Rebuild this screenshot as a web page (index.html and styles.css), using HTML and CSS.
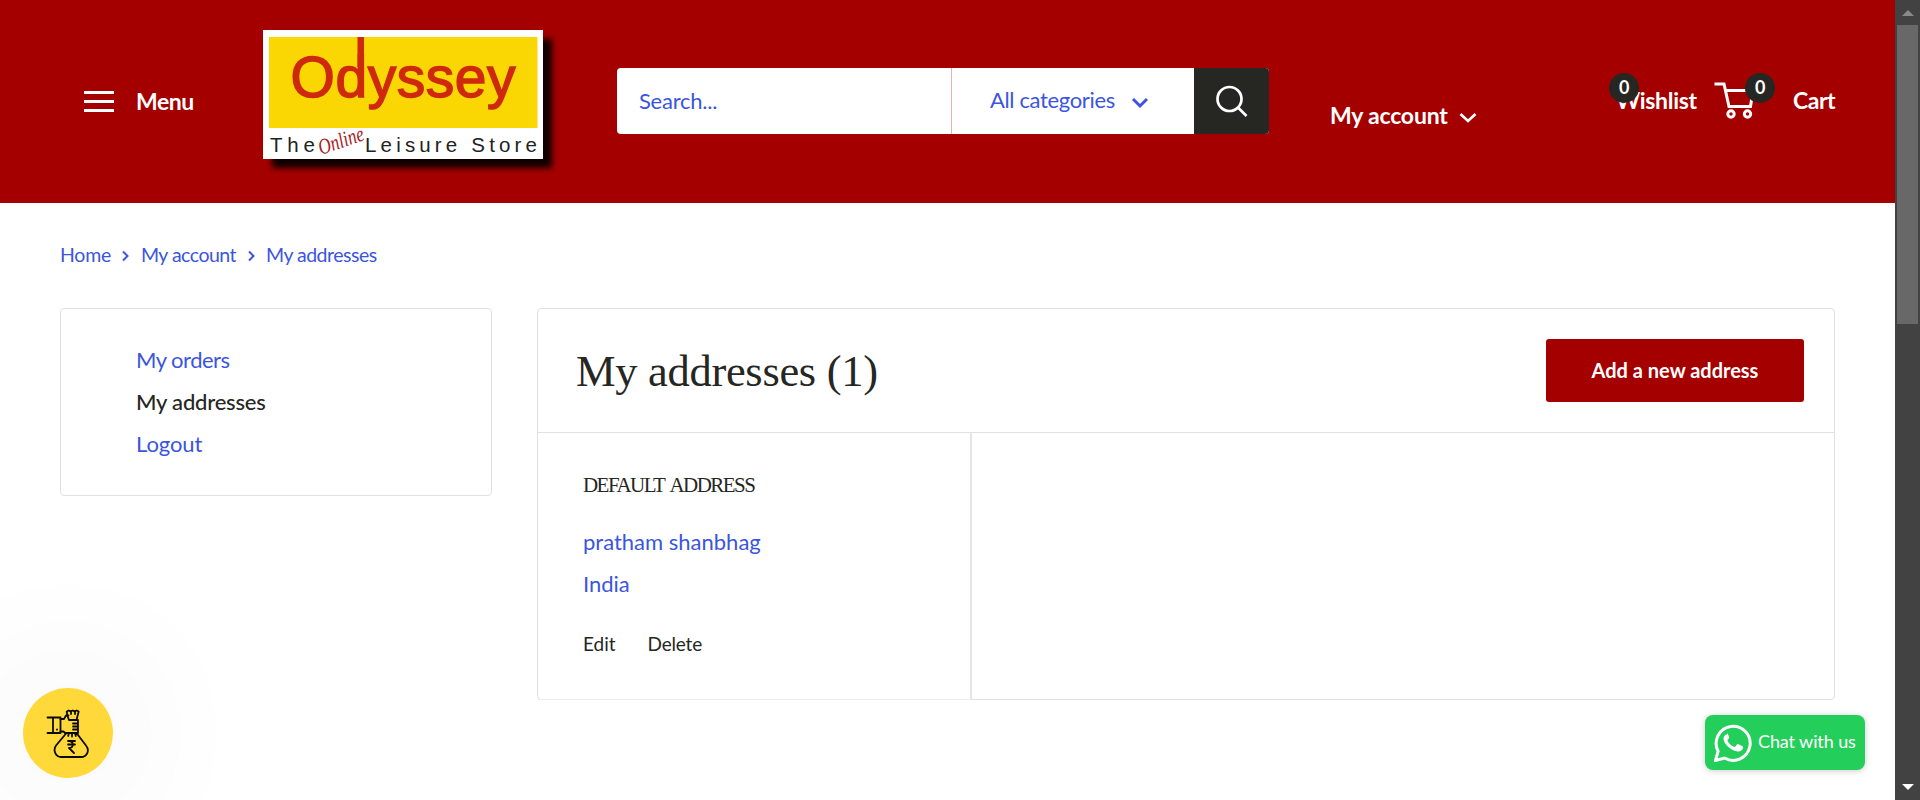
FILE: index.html
```html
<!DOCTYPE html>
<html lang="en">
<head>
<meta charset="utf-8">
<title>My addresses – Odyssey</title>
<link rel="stylesheet" href="styles.css">
</head>
<body>
<div class="viewport">
  <div class="page">
    <header class="header">
      <button class="menu"><span class="burger"><i></i><i></i><i></i></span><span class="t menu-label">Menu</span></button>
      <a class="logo" href="#">
        <svg width="280" height="129" viewBox="0 0 280 129" role="img" aria-label="Odyssey">
          <rect x="6" y="7" width="268.500" height="91" fill="#fad703"/>
          <rect x="94.500" y="7" width="6.500" height="30" fill="#cf290d"/>
          <text class="logo-name" x="27.500" y="67" textLength="225">Odyssey</text>
          <text class="logo-tag" x="7" y="122" textLength="45">The</text>
          <text class="logo-script" transform="translate(58 125) rotate(-19)" textLength="47" lengthAdjust="spacingAndGlyphs">Online</text>
          <text class="logo-tag" x="102" y="122" textLength="172">Leisure Store</text>
        </svg>
      </a>
      <form class="search">
        <span class="search-field"><span class="t search-text">Search...</span></span>
        <span class="search-cat"><span class="t cat-text">All categories</span>
          <svg width="18" height="12" viewBox="0 0 18 12"><path d="M2 2l7 7 7-7" fill="none" stroke="#3b55e0" stroke-width="3"/></svg></span>
        <span class="search-btn"><svg width="32" height="32" viewBox="0 0 32 32" fill="none" stroke="#fff" stroke-width="2.700"><circle cx="13.500" cy="14" r="12"/><path d="M22 22.500l8.500 8.500"/></svg></span>
      </form>
      <a class="account" href="#"><span class="t account-text">My account</span><svg width="18" height="12" viewBox="0 0 18 12"><path d="M1.500 2l7.500 7 7.500-7" fill="none" stroke="#fff" stroke-width="2.600"/></svg></a>
      <a class="wishlist" href="#"><span class="t wish-text">Wishlist</span><span class="badge">0</span></a>
      <a class="cart" href="#">
        <span class="cart-icon"><svg width="42" height="38" viewBox="0 0 42 38" fill="none" stroke="#fff" stroke-width="3"><path d="M.5 2h9.500l5 22.500h21.500l2.500-16H11.500"/><circle cx="17" cy="32" r="3.200"/><circle cx="33.500" cy="32" r="3.200"/></svg><span class="badge">0</span></span>
        <span class="t cart-text">Cart</span>
      </a>
    </header>

    <nav class="crumbs">
      <a class="t c1" href="#">Home</a>
      <svg width="9" height="12" viewBox="0 0 9 12"><path d="M2 1.500L6.500 6 2 10.500" fill="none" stroke="#3b55e0" stroke-width="2"/></svg>
      <a class="t c2" href="#">My account</a>
      <svg width="9" height="12" viewBox="0 0 9 12"><path d="M2 1.500L6.500 6 2 10.500" fill="none" stroke="#3b55e0" stroke-width="2"/></svg>
      <a class="t c3" href="#">My addresses</a>
    </nav>

    <main class="content">
      <aside class="side">
        <a class="s1" href="#"><span class="t">My orders</span></a>
        <a class="s2" href="#"><span class="t">My addresses</span></a>
        <a class="s3" href="#"><span class="t">Logout</span></a>
      </aside>
      <section class="card">
        <div class="card-head">
          <h1 class="t title">My addresses (1)</h1>
          <button class="add"><span class="t add-text">Add a new address</span></button>
        </div>
        <div class="address">
          <h2 class="label"><span class="t">DEFAULT ADDRESS</span></h2>
          <p class="name"><span class="t">pratham shanbhag</span></p>
          <p class="country"><span class="t">India</span></p>
          <div class="actions"><a class="t edit" href="#">Edit</a><a class="t delete" href="#">Delete</a></div>
        </div>
      </section>
    </main>
  </div>

  <div class="scrollbar">
    <svg width="12" height="6" viewBox="0 0 12 6"><path d="M0 6L6 0l6 6z" fill="#8a8a8a"/></svg>
    <span class="thumb"></span>
    <svg class="down" width="12" height="6" viewBox="0 0 12 6"><path d="M0 0l6 6 6-6z" fill="#fff"/></svg>
  </div>

  <button class="rewards"><svg width="44" height="50" viewBox="0 0 44 50" fill="none" stroke="#0b0a05" stroke-width="1.800" stroke-linejoin="round" stroke-linecap="round">
    <path d="M1.500 8.500h13v15.500h-13M7 8.500V24"/><path d="M11 20.500v.2"/>
    <path d="M14.500 10h3.500l2-3.500h2.500M14.500 22.500h3l1.500 1.500h13V11h-9l-1.500-4-.8-4.500 2-1 2 1 2-1 2 1 2-1 2 1-1.200 4.500-1 4M25 2v3M29 2v3M27 14.500h5M27 17.500h5M27 20.500h5"/>
    <path d="M20.500 24L10 36.500c-3.500 5 0 11.500 5 11.500h20c6 0 9-6.500 5-11.500L30.500 24M23 24l-.8 3M26 24v3.500M29 24l.8 3"/>
    <path d="M22 32h7M22 35.500h7M23 32c5 0 5 7 0 7l5 5"/></svg></button>

  <button class="chat">
    <svg width="38" height="38" viewBox="0 0 38 38"><path d="M1.500 36.500l2.600-9.300A17 17 0 1 1 10.600 34z" fill="none" stroke="#fff" stroke-width="3"/><path d="M13.200 10.500c-1.500-.5-3.700 1.300-3.700 4.300 0 4.500 7.500 12.700 14.500 12.700 3 0 5-2 5-4.300 0-.8-.5-1-1-1.300l-3.500-1.700c-.7-.3-1.200-.1-1.600.4l-1.500 1.900c-.4.5-.9.500-1.500.2-2.600-1.100-5-3.300-6.300-5.800-.3-.5-.1-.9.300-1.300l1.100-1.400c.3-.5.300-.8.100-1.300l-1.300-3.100c-.2-.4-.3-.5-.6-.5z" fill="#fff"/></svg>
    <span class="t chat-text">Chat with us</span>
  </button>
</div>
</body>
</html>
```
FILE: styles.css
```css
* { box-sizing: border-box; }
body { margin: 0; font-family: Lato, "Open Sans", sans-serif; font-size: 22px; color: #262623; background: #fff; }
a { color: #3b55e0; text-decoration: none; }
button { border: 0; padding: 0; font: inherit; color: inherit; }
h1, h2, p { margin: 0; font-weight: 400; }
svg { display: block; flex: none; }
.t { white-space: nowrap; }

.viewport { position: relative; display: flex; width: 1920px; height: 800px; overflow: hidden; }
.page { width: 1895px; flex: none; }

.header { display: flex; align-items: flex-start; height: 203px; background: #a50000; color: #fff; padding-left: 84px; font-weight: 700; font-size: 23px; }
.header a { color: #fff; }
.menu { display: flex; width: 179px; margin-top: 86px; background: none; line-height: 30px; letter-spacing: -.5px; }
.burger { display: flex; flex-direction: column; gap: 6px; width: 30px; margin: 5px 22px 0 0; }
.burger i { height: 3px; background: #fff; }
.logo { width: 280px; height: 129px; margin-top: 30px; background: #fff; box-shadow: 9px 9px 6px #100; }
.logo-name { font: 400 57px "Liberation Sans"; fill: #cf290d; stroke: #cf290d; stroke-width: 1.5; }
.logo-tag { font: 400 20.5px "Liberation Sans"; fill: #222; }
.logo-script { font: italic 400 22px "Liberation Serif"; fill: #a81c1c; }

.search { display: flex; width: 652px; height: 66px; margin: 68px 0 0 74px; border-radius: 4px; overflow: hidden; background: #fff; color: #3b55e0; font-weight: 400; font-size: 22px; line-height: 66px; }
.search-field { width: 335px; padding-left: 22px; border-right: 1px solid #e6b3b3; letter-spacing: -.25px; }
.search-cat { display: flex; width: 242px; padding: 0 0 2px 38px; align-items: center; letter-spacing: -.35px; }
.search-cat svg { margin: 5px 0 0 16px; }
.search-btn { display: flex; width: 75px; align-items: center; justify-content: center; background: #262623; }
.account { display: flex; width: 279px; margin: 100px 0 0 61px; line-height: 30px; letter-spacing: -.2px; }
.account svg { margin: 12px 0 0 11px; }
.wishlist { position: relative; width: 105px; margin-top: 85px; line-height: 30px; letter-spacing: -.3px; }
.badge { position: absolute; display: block; width: 30px; height: 30px; border-radius: 50%; background: #262623; font-size: 18px; line-height: 29px; text-align: center; }
.wishlist .badge { left: 0; top: -12px; }
.wish-text { margin-left: 7px; }
.cart { display: flex; margin-top: 85px; line-height: 30px; letter-spacing: -.5px; }
.cart-icon { position: relative; width: 79px; height: 38px; margin-top: -3px; }
.cart-icon .badge { left: 31px; top: -9px; }

.crumbs { display: flex; align-items: center; height: 24px; margin: 40px 0 0 60px; font-size: 19.5px; line-height: 24px; letter-spacing: -.5px; }
.crumbs svg { margin: 1px 10.5px 0; }
.crumbs .c1 { letter-spacing: -.25px; }

.content { display: flex; align-items: flex-start; gap: 45px; margin: 41px 0 0 60px; }
.side { display: flex; flex-direction: column; width: 432px; height: 188px; padding: 30px 0 0 75px; border: 1px solid #e1e1e1; border-radius: 4px; line-height: 42px; }
.side .s1 { letter-spacing: -.5px; }
.side .s2 { color: #262623; font-weight: 500; letter-spacing: -.2px; }
.side .s3 { letter-spacing: -.1px; }
.card { width: 1298px; height: 392px; border: 1px solid #e1e1e1; border-radius: 4px; }
.card-head { display: flex; align-items: center; justify-content: space-between; height: 124px; padding: 0 30px 0 38px; border-bottom: 1px solid #e1e1e1; }
.title { font: 400 44.5px/60px "Liberation Serif", serif; letter-spacing: -.3px; }
.add { width: 258px; height: 63px; padding-bottom: 2px; border-radius: 3px; background: #a50000; color: #fff; font-weight: 700; font-size: 20px; }
.address { width: 434px; height: 267px; padding: 39px 0 0 45px; border-right: 2px solid #e5e5e5; border-bottom: 1px solid #ececec; }
.label { font: 400 21px/26px "Liberation Serif", serif; letter-spacing: -1.55px; word-spacing: 3px; }
.name, .country { line-height: 42px; color: #3b55e0; }
.name { margin-top: 23px; }
.actions { display: flex; gap: 32px; margin-top: 25px; font-size: 19px; line-height: 28px; }
.actions a { color: #262623; }
.delete { letter-spacing: -.2px; }

.scrollbar { display: flex; flex-direction: column; align-items: center; width: 25px; height: 800px; padding-top: 10px; background: #424242; }
.thumb { width: 21px; height: 299px; margin-top: 9px; background: #686868; }
.scrollbar .down { margin: auto 0 10px; }

.rewards { position: absolute; left: 23px; top: 688px; display: flex; align-items: flex-start; width: 90px; height: 90px; border-radius: 50%; padding: 21px 0 0 23px; background: #ffd83a; box-shadow: 0 0 160px rgba(0,0,0,.12); }
.chat { position: absolute; left: 1705px; top: 715px; display: flex; align-items: center; width: 160px; height: 55px; padding-left: 9px; gap: 6px; border-radius: 8px; background: #23cf5a; color: #fff; font-size: 18px; letter-spacing: -.1px; box-shadow: 0 1px 6px rgba(0,0,0,.2); }
.chat-text { padding-bottom: 3px; }
```
